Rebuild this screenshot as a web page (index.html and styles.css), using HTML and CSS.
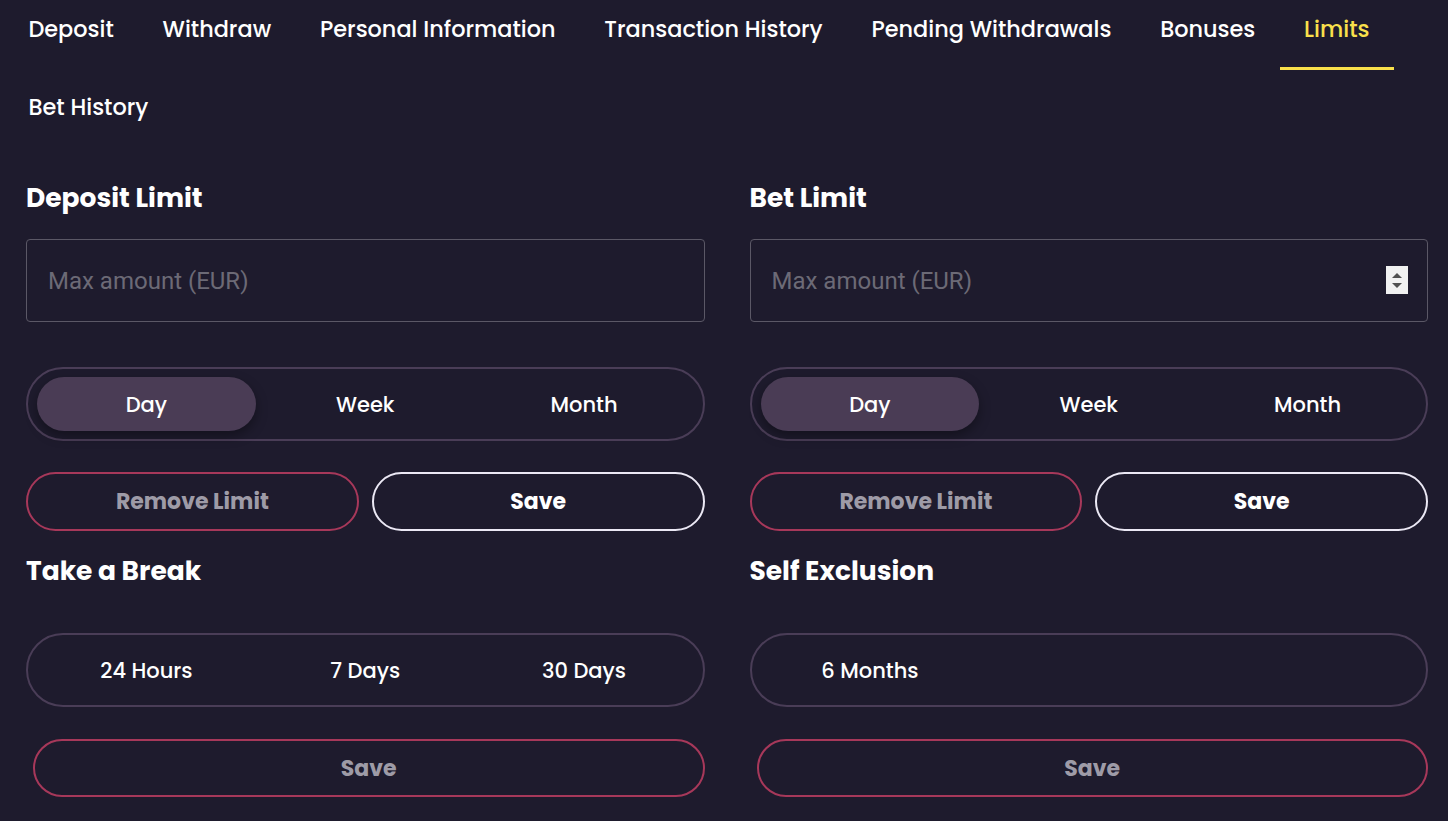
FILE: index.html
```html
<!DOCTYPE html>
<html lang="en">
<head>
    <meta charset="UTF-8">
    <meta name="viewport" content="width=device-width, initial-scale=1.0">
    <title>Limits</title>
    <link rel="stylesheet" href="styles.css">
</head>
<body>
<nav class="tabs">
    <a class="tab">Deposit</a>
    <a class="tab">Withdraw</a>
    <a class="tab">Personal Information</a>
    <a class="tab">Transaction History</a>
    <a class="tab">Pending Withdrawals</a>
    <a class="tab">Bonuses</a>
    <a class="tab on">Limits</a>
    <a class="tab">Bet History</a>
</nav>

<main class="limits">
    <section class="box">
        <h2>Deposit Limit</h2>
        <div class="field">
            <input type="text" placeholder="Max amount (EUR)">
        </div>
        <div class="seg">
            <span class="on">Day</span>
            <span>Week</span>
            <span>Month</span>
        </div>
        <div class="btns">
            <button class="btn red">Remove Limit</button>
            <button class="btn white">Save</button>
        </div>
    </section>

    <section class="box">
        <h2>Bet Limit</h2>
        <div class="field">
            <input type="text" placeholder="Max amount (EUR)">
            <span class="spin"><i class="up"></i><i class="down"></i></span>
        </div>
        <div class="seg">
            <span class="on">Day</span>
            <span>Week</span>
            <span>Month</span>
        </div>
        <div class="btns">
            <button class="btn red">Remove Limit</button>
            <button class="btn white">Save</button>
        </div>
    </section>

    <section class="box">
        <h2>Take a Break</h2>
        <div class="seg plain">
            <span>24 Hours</span>
            <span>7 Days</span>
            <span>30 Days</span>
        </div>
        <button class="btn red full">Save</button>
    </section>

    <section class="box">
        <h2>Self Exclusion</h2>
        <div class="seg plain">
            <span>6 Months</span>
        </div>
        <button class="btn red full">Save</button>
    </section>
</main>
</body>
</html>
```

FILE: styles.css
```css
* {margin:0; padding:0; box-sizing:border-box;}
body {background:#1e1b2d; color:#fff; font-family:"Poppins", Inter, "Noto Sans", sans-serif;}

/* tabs */
.tabs {display:flex; flex-wrap:wrap; row-gap:8px; padding-left:4px;}
.tab {display:block; padding:16px 24.4px 25px; font-size:22.4px; font-weight:500; line-height:26px; color:#fff; border-bottom:3px solid transparent; cursor:pointer;}
.tab.on {color:#f9e04b; border-bottom-color:#f9e04b;}

/* content */
.limits {display:grid; grid-template-columns:1fr 1fr; column-gap:45px; padding:32px 20px 0 26px;}
.box h2 {font-size:26.5px; font-weight:700; line-height:36px;}

.field {position:relative; margin-top:23px;}
.field input {display:block; width:100%; height:83px; padding:0 21px; background:transparent; border:1px solid #5b5866; border-radius:4px; font-family:Roboto, sans-serif; font-size:24px; color:#fff; outline:none;}
.field input::placeholder {color:#6c6a76;}
.spin {position:absolute; right:20px; top:27px; width:22px; height:28px; background:#f1f1f1; display:flex; flex-direction:column; align-items:center; justify-content:center; gap:5px;}
.spin i {width:0; height:0; border-left:5px solid transparent; border-right:5px solid transparent;}
.spin .up {border-bottom:5px solid #505050;}
.spin .down {border-top:5px solid #505050;}

.seg {display:grid; grid-template-columns:repeat(3, 1fr); height:74px; margin-top:45px; padding:8px 9px; border:2px solid #4a3d57; border-radius:40px;}
.seg span {display:flex; align-items:center; justify-content:center; border-radius:30px; font-size:21px; font-weight:500;}
.seg span.on {background:#4a3c55; box-shadow:0 5px 12px rgba(0,0,0,.35);}
.box .seg.plain {margin-top:44px;}

.btns {display:flex; gap:13px; margin-top:31px; margin-bottom:22px;}
.btn {height:59px; flex:1; background:transparent; border-radius:30px; font-family:inherit; font-size:22px; font-weight:700; cursor:pointer;}
.btn.red {border:2px solid #a7385a; color:#9e9ba7;}
.btn.white {border:2px solid #ebe8f4; color:#fff;}
.btn.full {display:block; width:calc(100% - 7px); height:58px; margin:32px 0 0 7px;}
```
